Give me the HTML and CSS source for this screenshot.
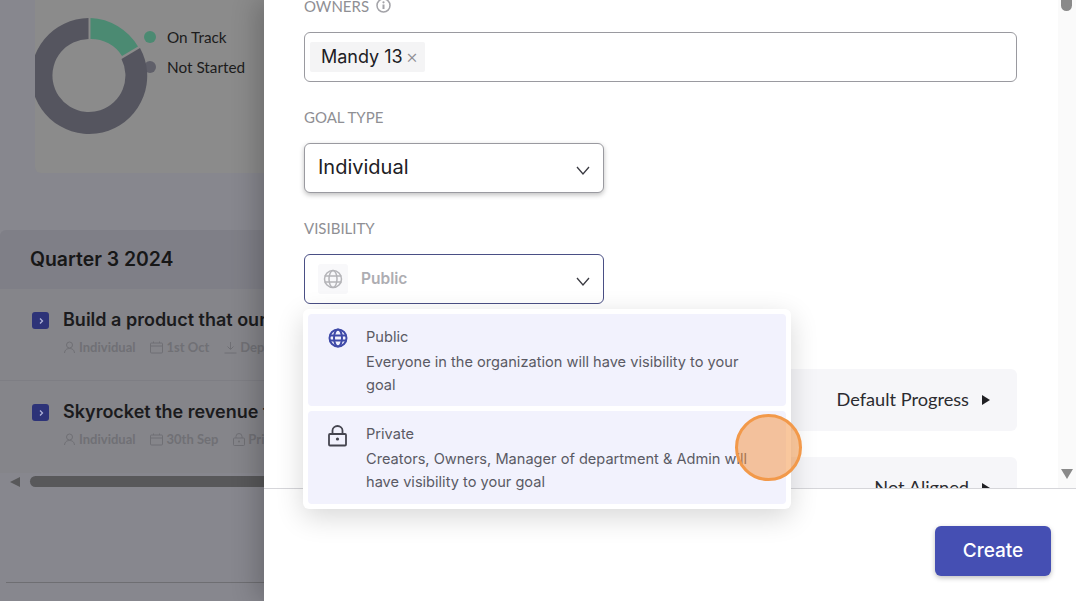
FILE: index.html
```html
<!DOCTYPE html>
<html lang="en">
<head>
    <meta charset="UTF-8">
    <title>Create Goal</title>
    <link rel="stylesheet" href="styles.css">
</head>
<body>
    <div class="backdrop">
        <div class="chart-card">
            <svg class="donut" width="116" height="140" viewBox="0 0 116 140">
                <path d="M53.500 18 A58 58 0 1 0 105 48 L86.500 59 A36.500 36.500 0 1 1 53.500 39 Z" fill="#55555f"/>
                <path d="M55.500 18 A58 58 0 0 1 103 46.500 L87 56 A36.500 36.500 0 0 0 55.500 39 Z" fill="#4b8a72"/>
            </svg>
            <div class="legend">
                <div class="legend-row"><span class="dot dot-green"></span>On Track</div>
                <div class="legend-row"><span class="dot dot-grey"></span>Not Started</div>
            </div>
        </div>

        <div class="quarter">
            <div class="quarter-head">Quarter 3 2024</div>
            <div class="goal">
                <div class="goal-title">
                    <span class="chevron-box"><svg width="8" height="8" viewBox="0 0 8 8"><path d="M3 1.500 L5.500 4 L3 6.500" fill="none" stroke="#aeb2d8" stroke-width="1.300"/></svg></span>
                    Build a product that our customers love
                </div>
                <div class="goal-meta">
                    <span class="meta-item"><svg width="13" height="13" viewBox="0 0 13 13"><circle cx="6.500" cy="4" r="3" fill="none" stroke="#6f6f74"/><path d="M1.500 12 C2 8.500 4 7.500 6.500 7.500 C9 7.500 11 8.500 11.500 12" fill="none" stroke="#6f6f74"/></svg>Individual</span>
                    <span class="meta-item"><svg width="13" height="13" viewBox="0 0 13 13"><rect x="0.500" y="2" width="12" height="10" rx="1" fill="none" stroke="#6f6f74"/><path d="M0.500 5 H12.500 M3.500 0.500 V2 M9.500 0.500 V2" stroke="#6f6f74"/></svg>1st Oct</span>
                    <span class="meta-item"><svg width="13" height="13" viewBox="0 0 13 13"><path d="M6.500 1 V8 M3.500 5.500 L6.500 8.500 L9.500 5.500 M0.500 12 H12.500" fill="none" stroke="#6f6f74"/></svg>Department</span>
                </div>
            </div>
            <div class="goal">
                <div class="goal-title">
                    <span class="chevron-box"><svg width="8" height="8" viewBox="0 0 8 8"><path d="M3 1.500 L5.500 4 L3 6.500" fill="none" stroke="#aeb2d8" stroke-width="1.300"/></svg></span>
                    Skyrocket the revenue this quarter
                </div>
                <div class="goal-meta">
                    <span class="meta-item"><svg width="13" height="13" viewBox="0 0 13 13"><circle cx="6.500" cy="4" r="3" fill="none" stroke="#6f6f74"/><path d="M1.500 12 C2 8.500 4 7.500 6.500 7.500 C9 7.500 11 8.500 11.500 12" fill="none" stroke="#6f6f74"/></svg>Individual</span>
                    <span class="meta-item"><svg width="13" height="13" viewBox="0 0 13 13"><rect x="0.500" y="2" width="12" height="10" rx="1" fill="none" stroke="#6f6f74"/><path d="M0.500 5 H12.500 M3.500 0.500 V2 M9.500 0.500 V2" stroke="#6f6f74"/></svg>30th Sep</span>
                    <span class="meta-item"><svg width="12" height="13" viewBox="0 0 12 13"><rect x="0.500" y="5" width="11" height="7.500" rx="1" fill="none" stroke="#6f6f74"/><path d="M3 5 V3.500 A3 3 0 0 1 9 3.500 V5" fill="none" stroke="#6f6f74"/><circle cx="6" cy="8.500" r="1" fill="#6f6f74"/></svg>Private</span>
                </div>
            </div>
        </div>

        <div class="h-scroll">
            <span class="arrow-left"></span>
            <span class="h-thumb"></span>
        </div>
        <div class="bottom-rule"></div>
    </div>

    <div class="drawer">
        <div class="drawer-body">
            <div class="form">
                <div class="field-label owners-label">OWNERS
                    <svg width="15" height="15" viewBox="0 0 15 15"><circle cx="7.500" cy="7.500" r="6.500" fill="none" stroke="#a3a3a8" stroke-width="1.500"/><path d="M7.500 6.500 V11" stroke="#a3a3a8" stroke-width="2"/><circle cx="7.500" cy="4.300" r="1.100" fill="#a3a3a8"/></svg>
                </div>
                <div class="tag-input">
                    <span class="tag">Mandy 13 <span class="tag-x">×</span></span>
                </div>

                <div class="field-label">GOAL TYPE</div>
                <div class="select select-shadow">
                    <span class="select-value">Individual</span>
                    <svg class="caret" width="14" height="9" viewBox="0 0 14 9"><path d="M1 1 L7 8 L13 1" fill="none" stroke="#3a3a42" stroke-width="1.300"/></svg>
                </div>

                <div class="field-label">VISIBILITY</div>
                <div class="select select-open">
                    <span class="globe-box">
                        <svg width="20" height="20" viewBox="0 0 20 20"><g fill="none" stroke="#b4b4b8" stroke-width="1.500"><circle cx="10" cy="10" r="8.500"/><ellipse cx="10" cy="10" rx="4" ry="8.500"/><path d="M1.500 7 H18.500 M1.500 13 H18.500"/></g></svg>
                    </span>
                    <span class="select-placeholder">Public</span>
                    <svg class="caret" width="14" height="9" viewBox="0 0 14 9"><path d="M1 1 L7 8 L13 1" fill="none" stroke="#3a3a42" stroke-width="1.300"/></svg>
                </div>

                <div class="option-row first-row">Default Progress <span class="tri"></span></div>
                <div class="option-row">Not Aligned <span class="tri"></span></div>
            </div>

            <div class="scrollbar">
                <span class="v-thumb"></span>
                <span class="arrow-down"></span>
            </div>
        </div>

        <div class="drawer-footer">
            <button class="create-btn" type="button">Create</button>
        </div>

        <div class="menu">
            <div class="menu-item">
                <svg width="20" height="20" viewBox="0 0 20 20"><g fill="none" stroke="#3f4aa8" stroke-width="2"><circle cx="10" cy="10" r="8.500"/><ellipse cx="10" cy="10" rx="4" ry="8.500"/><path d="M1.500 7.500 H18.500 M1.500 12.500 H18.500"/></g></svg>
                <div>
                    <div class="menu-title">Public</div>
                    <div class="menu-desc">Everyone in the organization will have visibility to your goal</div>
                </div>
            </div>
            <div class="menu-item menu-item-low">
                <svg width="20" height="22" viewBox="0 0 20 22"><rect x="1" y="9" width="17" height="11.500" rx="1" fill="none" stroke="#45454f" stroke-width="1.800"/><path d="M4.500 9 V5.500 A5 4.500 0 0 1 14.500 5.500 V9" fill="none" stroke="#45454f" stroke-width="1.800"/><circle cx="9.500" cy="14" r="1.600" fill="#45454f"/></svg>
                <div>
                    <div class="menu-title">Private</div>
                    <div class="menu-desc">Creators, Owners, Manager of department &amp; Admin will have visibility to your goal</div>
                </div>
            </div>
        </div>

        <div class="click-marker"></div>
    </div>
</body>
</html>
```

FILE: styles.css
```css
* {
    box-sizing: border-box;
}

html, body {
    height: 100%;
}

body {
    margin: 0;
    display: flex;
    overflow: hidden;
    font-family: Lato, sans-serif;
    background-color: #ffffff;
}

/* dimmed page behind the drawer */
.backdrop {
    width: 264px;
    height: 601px;
    flex-shrink: 0;
    overflow: hidden;
    background-color: #87878e;
}

.chart-card {
    width: 300px;
    height: 173px;
    margin-left: 35px;
    display: flex;
    background-color: #8b8b8b;
    border-radius: 0 0 0 6px;
    overflow: hidden;
}

.donut {
    position: relative;
    z-index: 1;
    flex-shrink: 0;
}

.legend {
    padding-top: 22px;
    margin-left: -7px;
    font-size: 15.300px;
    color: #1c1c1c;
}

.legend-row {
    height: 30px;
    display: flex;
    align-items: center;
    white-space: nowrap;
}

.dot {
    width: 12px;
    height: 12px;
    border-radius: 50%;
    margin-right: 11px;
}

.dot-green {
    background-color: #4b8a72;
}

.dot-grey {
    background-color: #5f5f69;
}

.quarter {
    margin-top: 57px;
}

.quarter-head {
    height: 59px;
    padding: 0 0 2px 30px;
    display: flex;
    align-items: center;
    font-family: Inter, sans-serif;
    font-size: 19.400px;
    font-weight: 600;
    color: #171717;
    background-color: #7f7f87;
    border-radius: 6px 0 0 0;
}

.goal {
    height: 92px;
    padding: 20px 0 0 32px;
    border-bottom: 1px solid #7e7e84;
    background-color: #85858a;
    white-space: nowrap;
}

.goal:last-child {
    border-bottom: none;
}

.goal-title {
    display: flex;
    align-items: center;
    gap: 14px;
    font-family: Inter, sans-serif;
    font-size: 18px;
    font-weight: 600;
    color: #1b1b1d;
}

.chevron-box {
    width: 17px;
    height: 17px;
    margin-top: 2px;
    flex-shrink: 0;
    display: flex;
    align-items: center;
    justify-content: center;
    background-color: #2d3378;
    border-radius: 3px;
}

.goal-meta {
    display: flex;
    gap: 15px;
    margin: 9px 0 0 31px;
    font-size: 13px;
    font-weight: 700;
    color: #707075;
}

.meta-item {
    display: flex;
    align-items: center;
    gap: 3px;
}

.h-scroll {
    display: flex;
    align-items: center;
    height: 11px;
    margin-top: 3px;
    padding-left: 10px;
}

.arrow-left {
    width: 0;
    height: 0;
    border-style: solid;
    border-width: 5.500px 10px 5.500px 0;
    border-color: transparent #58585a transparent transparent;
}

.h-thumb {
    flex: 1;
    height: 11px;
    margin-left: 10px;
    background-color: #58585a;
    border-radius: 6px 0 0 6px;
}

.bottom-rule {
    height: 1px;
    margin: 95px 0 0 6px;
    background-color: #6e6e72;
}

/* drawer */
.drawer {
    position: relative;
    flex: 1;
    height: 601px;
    display: flex;
    flex-direction: column;
    background-color: #ffffff;
    box-shadow: -8px 0 24px rgba(0, 0, 0, 0.2);
}

.drawer-body {
    height: 489px;
    flex-shrink: 0;
    display: flex;
    overflow: hidden;
    border-bottom: 1px solid #d6d6da;
}

.form {
    flex: 1;
    padding: 0 41px 0 40px;
}

.field-label {
    height: 15px;
    margin-top: 27px;
    margin-bottom: 19px;
    display: flex;
    align-items: center;
    gap: 7px;
    font-size: 15px;
    color: #8f8f94;
}

.owners-label {
    margin-top: -2px;
    margin-bottom: 19px;
}

.tag-input {
    height: 50px;
    padding: 9px 5px 0;
    border: 1px solid #9a9aa0;
    border-radius: 6px;
}

.tag {
    display: inline-block;
    height: 30px;
    padding: 0 7px 0 11px;
    line-height: 30px;
    font-family: Inter, sans-serif;
    font-size: 18px;
    color: #202024;
    background-color: #f4f4f5;
    border-radius: 2px;
    vertical-align: top;
}

.tag-x {
    margin-left: -2px;
    font-size: 19px;
    font-weight: 300;
    color: #8d8d92;
}

.select {
    position: relative;
    width: 300px;
    height: 50px;
    display: flex;
    align-items: center;
    padding-left: 13px;
    border: 1px solid #9a9aa0;
    border-radius: 6px;
    background-color: #ffffff;
}

.select-shadow {
    box-shadow: 0 2px 5px rgba(0, 0, 0, 0.25);
}

.select-open {
    padding-left: 14px;
    border-color: #4a4f85;
}

.select-value {
    padding-bottom: 2px;
    font-family: Inter, sans-serif;
    font-size: 20px;
    color: #202024;
}

.select-placeholder {
    padding-bottom: 2px;
    font-family: Inter, sans-serif;
    font-size: 15.500px;
    font-weight: 600;
    color: #adadb2;
    margin-left: 13px;
}

.globe-box {
    width: 30px;
    height: 30px;
    margin-left: -1px;
    display: flex;
    align-items: center;
    justify-content: center;
    background-color: #f8f8fa;
    border-radius: 3px;
}

.caret {
    position: absolute;
    right: 13px;
    top: 22px;
}

.option-row {
    height: 62px;
    display: flex;
    align-items: center;
    justify-content: flex-end;
    gap: 13px;
    padding: 0 27px 2px 0;
    margin-top: 26px;
    font-size: 18.200px;
    color: #2b2b30;
    background-color: #f6f6f9;
    border-radius: 6px;
}

.first-row {
    margin-top: 65px;
}

.tri {
    width: 0;
    height: 0;
    margin-top: 2px;
    border-style: solid;
    border-width: 5px 0 5px 8px;
    border-color: transparent transparent transparent #202024;
}

.scrollbar {
    position: relative;
    width: 18px;
    flex-shrink: 0;
    background-color: #fafafa;
}

.v-thumb {
    display: block;
    width: 11px;
    height: 11px;
    margin-left: 3px;
    background-color: #8a8a8a;
    border-radius: 0 0 6px 6px;
}

.arrow-down {
    position: absolute;
    left: 3px;
    top: 469px;
    width: 0;
    height: 0;
    border-style: solid;
    border-width: 10px 6px 0 6px;
    border-color: #8a8a8a transparent transparent transparent;
}

.drawer-footer {
    flex: 1;
    display: flex;
    justify-content: flex-end;
    align-items: flex-start;
    padding: 37px 25px 0 0;
}

.create-btn {
    width: 116px;
    height: 50px;
    padding-bottom: 3px;
    font-family: Inter, sans-serif;
    font-size: 19px;
    font-weight: 500;
    color: #ffffff;
    background-color: #454fb3;
    border: none;
    border-radius: 6px;
    box-shadow: 0 2px 5px rgba(0, 0, 0, 0.25);
}

/* open visibility dropdown */
.menu {
    position: absolute;
    left: 39px;
    top: 309px;
    width: 488px;
    height: 200px;
    padding: 5px;
    display: flex;
    flex-direction: column;
    gap: 5px;
    background-color: #ffffff;
    border-radius: 6px;
    box-shadow: 0 8px 28px rgba(0, 0, 0, 0.16);
}

.menu-item {
    height: 92px;
    display: flex;
    gap: 18px;
    padding: 14px 30px 0 20px;
    background-color: #f2f2fd;
    border-radius: 4px;
}

.menu-item-low {
    height: 93px;
}

.menu-item svg {
    flex-shrink: 0;
}

.menu-title {
    font-family: Inter, sans-serif;
    font-size: 14.600px;
    line-height: 18px;
    color: #5a5a64;
}

.menu-desc {
    margin-top: 5px;
    font-family: Inter, sans-serif;
    font-size: 14.600px;
    line-height: 23px;
    color: #5a5a64;
}

.click-marker {
    position: absolute;
    left: 471px;
    top: 414px;
    width: 67px;
    height: 67px;
    background-color: rgba(244, 144, 60, 0.5);
    border: 3px solid #f2994a;
    border-radius: 50%;
}
```
